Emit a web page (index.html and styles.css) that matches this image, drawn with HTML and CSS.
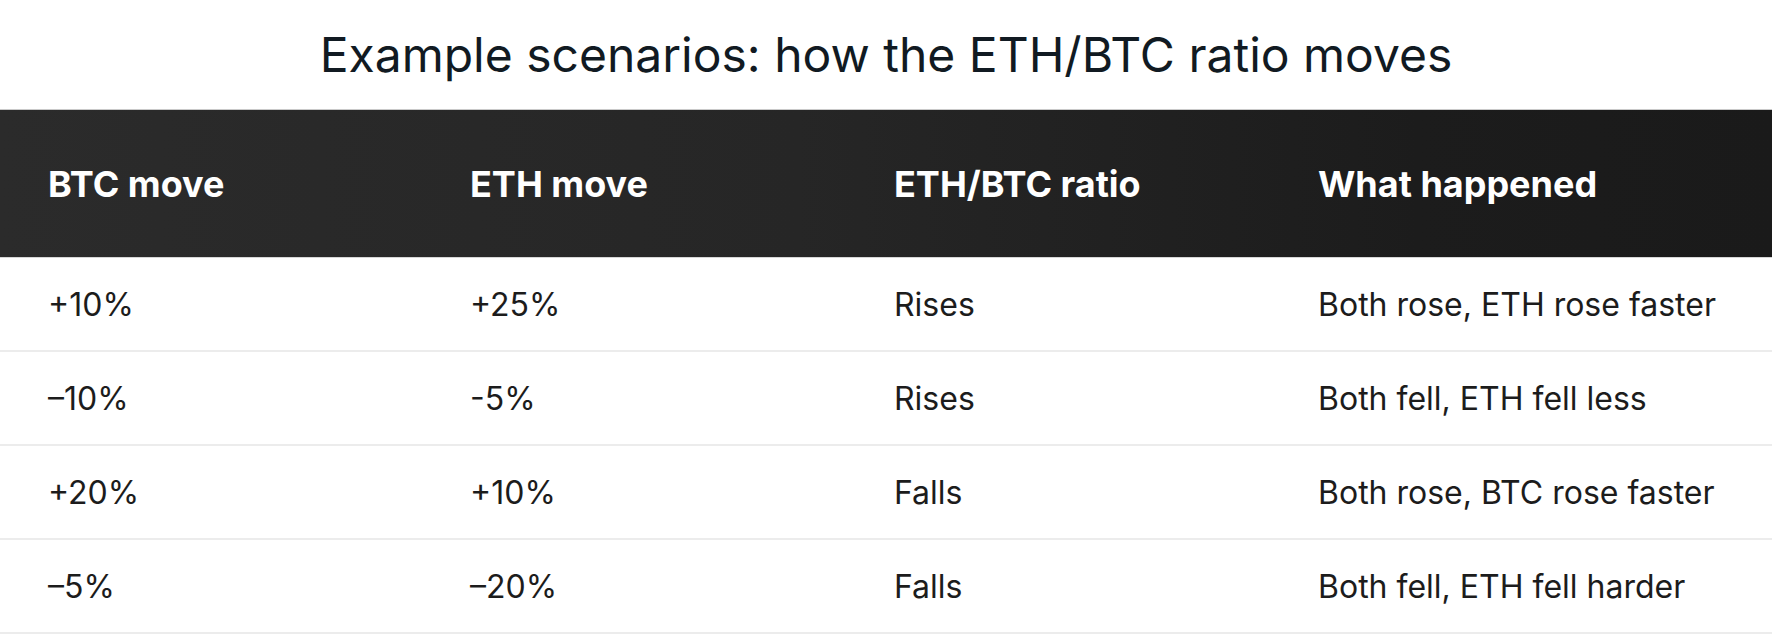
FILE: index.html
```html
<!DOCTYPE html>
<html lang="en">
<head>
<meta charset="utf-8">
<title>Example scenarios</title>
<link rel="stylesheet" href="styles.css">
</head>
<body>
<div class="page">
  <h1 class="title">Example scenarios: how the ETH/BTC ratio moves</h1>
  <div class="table">
    <div class="row head">
      <div class="cell">BTC move</div>
      <div class="cell">ETH move</div>
      <div class="cell">ETH/BTC ratio</div>
      <div class="cell">What happened</div>
    </div>
    <div class="row">
      <div class="cell">+10%</div>
      <div class="cell">+25%</div>
      <div class="cell">Rises</div>
      <div class="cell">Both rose, ETH rose faster</div>
    </div>
    <div class="row">
      <div class="cell">&ndash;10%</div>
      <div class="cell">-5%</div>
      <div class="cell">Rises</div>
      <div class="cell">Both fell, ETH fell less</div>
    </div>
    <div class="row">
      <div class="cell">+20%</div>
      <div class="cell">+10%</div>
      <div class="cell">Falls</div>
      <div class="cell">Both rose, BTC rose faster</div>
    </div>
    <div class="row">
      <div class="cell">&ndash;5%</div>
      <div class="cell">&ndash;20%</div>
      <div class="cell">Falls</div>
      <div class="cell">Both fell, ETH fell harder</div>
    </div>
  </div>
</div>
</body>
</html>
```

FILE: styles.css
```css
html, body {
  margin: 0;
  padding: 0;
  background: #ffffff;
}

body {
  font-family: Inter, "Noto Sans", "Liberation Sans", sans-serif;
  color: #1c1c1c;
}

.page {
  width: 1772px;
}

.title {
  margin: 0;
  height: 109px;
  display: flex;
  align-items: center;
  justify-content: center;
  font-size: 48px;
  font-weight: 400;
  color: #111a22;
  letter-spacing: 0;
  padding-bottom: 1px;
  box-sizing: border-box;
}

.table {
  display: flex;
  flex-direction: column;
}

.row {
  display: grid;
  grid-template-columns: 422px 424px 424px 1fr;
  height: 94px;
  align-items: center;
  border-bottom: 2px solid #ececec;
  box-sizing: border-box;
  font-size: 32px;
}

.row.head {
  height: 149px;
  border-top: 1px solid #c9c9c9;
  border-bottom: 1px solid #d6d6d6;
  background: linear-gradient(90deg, #2b2b2b 0%, #262626 45%, #1c1c1c 80%, #1a1a1a 100%);
  color: #ffffff;
  font-weight: 700;
  font-size: 36px;
}

.cell {
  padding-left: 48px;
  white-space: nowrap;
}
```
